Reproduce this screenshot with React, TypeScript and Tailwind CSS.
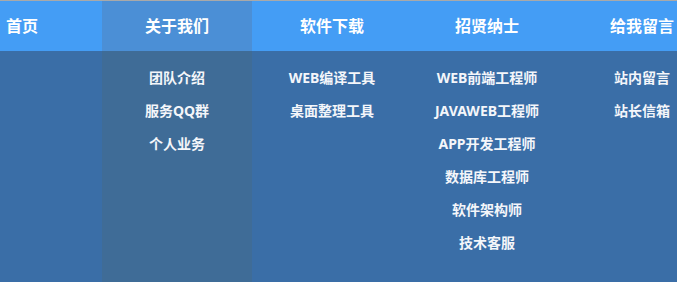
const menus = [
  { title: '首页', items: [] as string[] },
  { title: '关于我们', items: ['团队介绍', '服务QQ群', '个人业务'], active: true },
  { title: '软件下载', items: ['WEB编译工具', '桌面整理工具'] },
  { title: '招贤纳士', items: ['WEB前端工程师', 'JAVAWEB工程师', 'APP开发工程师', '数据库工程师', '软件架构师', '技术客服'] },
  { title: '给我留言', items: ['站内留言', '站长信箱'] },
];

export default function App() {
  return (
    <div
      className="h-[282px] w-full overflow-hidden border-t border-[#a9a9a9] bg-[#3a6ea7] text-white"
      style={{ fontFamily: '"Noto Sans", "Noto Sans CJK SC", sans-serif' }}
    >
      {/* Top bar */}
      <div className="h-[50px] bg-[#449df5]">
        <ul className="ml-[-53px] flex h-full gap-[5px]">
          {menus.map((m) => (
            <li
              key={m.title}
              className={`flex h-full w-[150px] shrink-0 items-center justify-center text-base font-bold ${
                m.active ? 'bg-[#4b8fd6]' : ''
              }`}
            >
              {m.title}
            </li>
          ))}
        </ul>
      </div>

      {/* Dropdowns */}
      <div className="ml-[-53px] flex h-[231px] gap-[5px]">
        {menus.map((m) => (
          <ul key={m.title} className={`w-[150px] shrink-0 pt-[10px] ${m.active ? 'bg-[#3f6c97]' : ''}`}>
            {m.items.map((item) => (
              <li key={item} className="flex h-[33px] items-center justify-center text-sm font-bold text-[#f4f6fa]">
                {item}
              </li>
            ))}
          </ul>
        ))}
      </div>
    </div>
  );
}
